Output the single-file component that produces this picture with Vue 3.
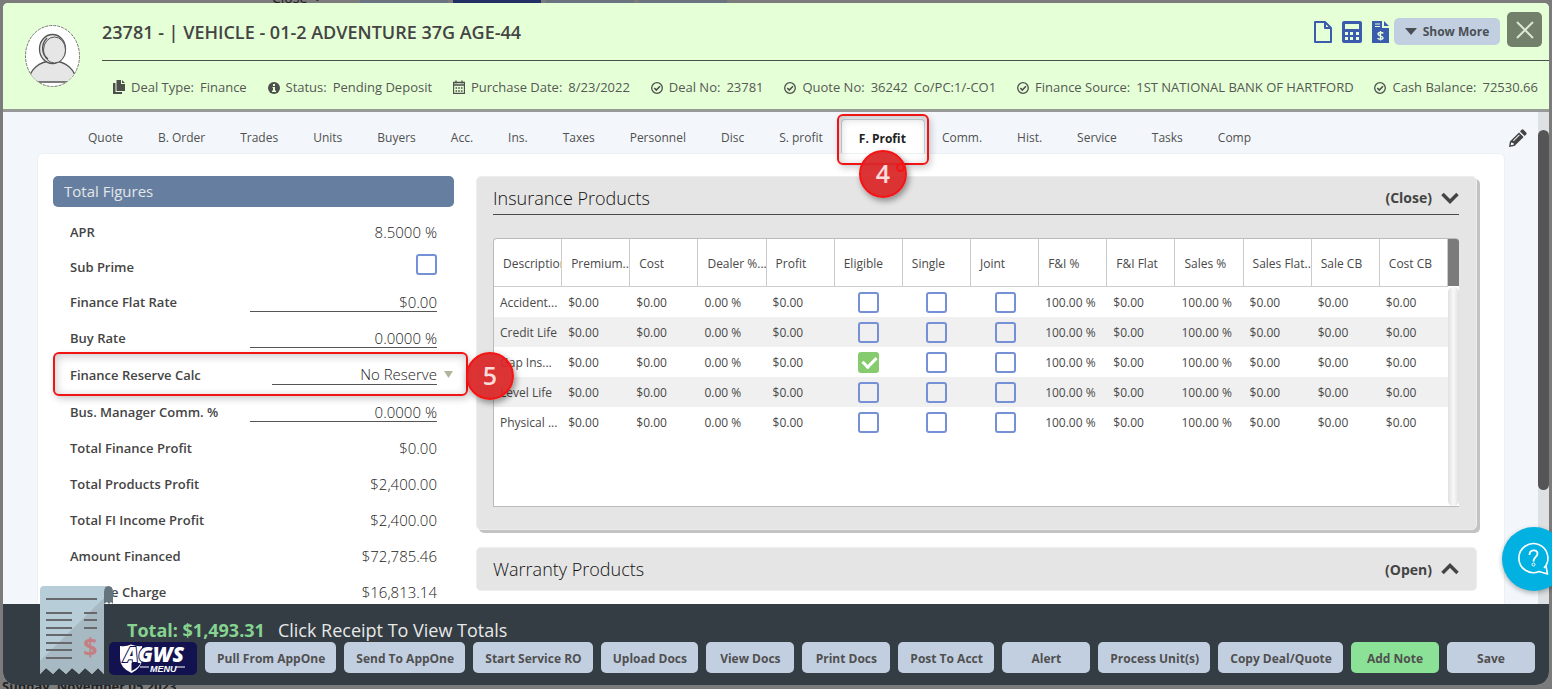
<script setup>
import { ref } from 'vue'

const tabs = ['Quote', 'B. Order', 'Trades', 'Units', 'Buyers', 'Acc.', 'Ins.', 'Taxes', 'Personnel', 'Disc', 'S. profit', 'F. Profit', 'Comm.', 'Hist.', 'Service', 'Tasks', 'Comp']
const active = ref('F. Profit')

const details = [
  { icon: 'copy', label: 'Deal Type:', value: 'Finance' },
  { icon: 'info', label: 'Status:', value: 'Pending Deposit' },
  { icon: 'calendar', label: 'Purchase Date:', value: '8/23/2022' },
  { icon: 'check', label: 'Deal No:', value: '23781' },
  { icon: 'check', label: 'Quote No:', value: '36242', extra: 'Co/PC:1/-CO1' },
  { icon: 'check', label: 'Finance Source:', value: '1ST NATIONAL BANK OF HARTFORD' },
  { icon: 'check', label: 'Cash Balance:', value: '72530.66' },
]

const figures = ref([
  { id: 'apr', label: 'APR', value: '8.5000 %', kind: 'text' },
  { id: 'sub', label: 'Sub Prime', value: false, kind: 'check' },
  { id: 'flat', label: 'Finance Flat Rate', value: '$0.00', kind: 'input' },
  { id: 'buy', label: 'Buy Rate', value: '0.0000 %', kind: 'input' },
  { id: 'reserve', label: 'Finance Reserve Calc', value: 'No Reserve', kind: 'select' },
  { id: 'comm', label: 'Bus. Manager Comm. %', value: '0.0000 %', kind: 'input' },
  { id: 'tfp', label: 'Total Finance Profit', value: '$0.00', kind: 'text' },
  { id: 'tpp', label: 'Total Products Profit', value: '$2,400.00', kind: 'text' },
  { id: 'tfi', label: 'Total FI Income Profit', value: '$2,400.00', kind: 'text' },
  { id: 'amt', label: 'Amount Financed', value: '$72,785.46', kind: 'text' },
  { id: 'chg', label: 'Finance Charge', value: '$16,813.14', kind: 'text' },
])

const columns = ['Description', 'Premium...', 'Cost', 'Dealer %...', 'Profit', 'Eligible', 'Single', 'Joint', 'F&I %', 'F&I Flat', 'Sales %', 'Sales Flat...', 'Sale CB', 'Cost CB']
const products = ref([
  { name: 'Accident...', flags: [false, false, false] },
  { name: 'Credit Life', flags: [false, false, false] },
  { name: 'Gap Ins...', flags: [true, false, false] },
  { name: 'Level Life', flags: [false, false, false] },
  { name: 'Physical ...', flags: [false, false, false] },
])
const before = ['$0.00', '$0.00', '0.00 %', '$0.00']
const after = ['100.00 %', '$0.00', '100.00 %', '$0.00', '$0.00', '$0.00']
const actions = ['Pull From AppOne', 'Send To AppOne', 'Start Service RO', 'Upload Docs', 'View Docs', 'Print Docs', 'Post To Acct', 'Alert', 'Process Unit(s)', 'Copy Deal/Quote', 'Add Note', 'Save']
</script>

<template>
  <div class="page">
    <div class="under-top" aria-hidden="true">
      <span class="under-close">Close &lt;</span><i></i><i class="navy"></i><i></i><i></i>
    </div>
    <div class="under-date">Sunday, November 05 2023</div>

    <main class="modal">
      <header class="head">
        <svg class="avatar" viewBox="0 0 55 62">
          <defs><clipPath id="oval"><ellipse cx="27.5" cy="31" rx="27" ry="30.5" /></clipPath></defs>
          <ellipse cx="27.5" cy="31" rx="27" ry="30.5" fill="#fff" stroke="#777" stroke-width="1" stroke-dasharray="3 1" />
          <g clip-path="url(#oval)" fill="#e6e6e6" stroke="#555" stroke-width="1.3">
            <path d="M4 57C4 45 14 36 27.500 36S51 45 51 57z" />
            <ellipse cx="27.500" cy="24" rx="13" ry="14.500" />
            <ellipse cx="29.500" cy="25" rx="11" ry="13" stroke-width="1" />
            <path d="M22 13c-6 6-6 16 1 21" fill="none" />
          </g>
        </svg>
        <div class="head-main">
          <div class="title-row">
            <h1>23781 - | VEHICLE - 01-2 ADVENTURE 37G AGE-44</h1>
            <div class="tools">
              <button class="tool" aria-label="New document">
                <svg width="18" height="22" viewBox="0 0 18 22"><path d="M1 1h10l6 6v14H1zM11 1v6h6" fill="none" stroke="#3b5bad" stroke-width="2" stroke-linejoin="round" /></svg>
              </button>
              <button class="tool" aria-label="Calculator">
                <svg width="20" height="22" viewBox="0 0 20 22"><path fill="#3b5bad" fill-rule="evenodd" d="M2 0h16a2 2 0 0 1 2 2v18a2 2 0 0 1-2 2H2a2 2 0 0 1-2-2V2a2 2 0 0 1 2-2zM3 3v5h14V3zM3 11v3h3v-3zM8 11v3h3v-3zM14 11v3h3v-3zM3 16v3h3v-3zM8 16v3h3v-3zM14 16v3h3v-3z" /></svg>
              </button>
              <button class="tool" aria-label="Invoice">
                <svg width="17" height="22" viewBox="0 0 17 22"><path fill="#3b5bad" d="M0 0h10v7h7v15H0zM12 0l5 5h-5z" /><path d="M3 3h5M3 5.500h5" stroke="#e5ffd6" /><path d="M11.300 12.500C10.500 11 6 11 6 13s5 1.700 5 3.700-4.500 2-5.400.3M8.500 10v9.500" fill="none" stroke="#e5ffd6" stroke-width="1.400" /></svg>
              </button>
              <button class="show-more"><svg width="12" height="7" viewBox="0 0 12 7"><path d="M0 0h12L6 7z" fill="#4a4f55" /></svg>Show More</button>
              <button class="close" aria-label="Close"><svg width="18" height="18" viewBox="0 0 18 18"><path d="M1 1l16 16M17 1L1 17" stroke="#dbe6d3" stroke-width="2" /></svg></button>
            </div>
          </div>
          <div class="details">
            <span v-for="d in details" :key="d.label" class="detail">
              <svg v-if="d.icon === 'copy'" width="12" height="14" viewBox="0 0 12 14"><path d="M3.500 0H8v4h4v7H3.500zM9 0l3 3H9zM0 3h2.500v9H9v2H0z" fill="#4c4f4c" /></svg>
              <svg v-else-if="d.icon === 'info'" width="12" height="14" viewBox="0 0 12 14"><circle cx="6" cy="8" r="6" fill="#4c4f4c" /><path d="M5 4h2v2H5zM4.500 7H7v3.500h1V12H4v-1.500h1V8h-.500z" fill="#e5ffd6" /></svg>
              <svg v-else-if="d.icon === 'calendar'" width="12" height="14" viewBox="0 0 12 14"><path d="M.5 2.500h11v11H.5zM.5 5h11M3 .5v3M9 .5v3" fill="none" stroke="#4c4f4c" stroke-width="1.300" /><path d="M2.500 8h7M2.500 11h7" stroke="#4c4f4c" stroke-width="1.600" stroke-dasharray="1.600 1.100" /></svg>
              <svg v-else width="12" height="14" viewBox="0 0 12 14"><circle cx="6" cy="8" r="5.300" fill="none" stroke="#4c4f4c" stroke-width="1.300" /><path d="M3.300 8l2 2L9 6.200" fill="none" stroke="#4c4f4c" stroke-width="1.600" /></svg>
              <span>{{ d.label }}</span><span>{{ d.value }}</span><span v-if="d.extra">{{ d.extra }}</span>
            </span>
          </div>
        </div>
      </header>

      <section class="body">
        <div class="content">
          <nav class="tabs">
            <button v-for="t in tabs" :key="t" :class="['tab', { on: t === active }]" @click="active = t">
              {{ t }}
              <span v-if="t === 'F. Profit'" class="mark tab-mark"></span>
              <span v-if="t === 'F. Profit'" class="badge tab-badge">4<i></i></span>
            </button>
            <button class="edit" aria-label="Edit">
              <svg width="18" height="18" viewBox="0 0 18 18"><path fill="#444" fill-rule="evenodd" d="M12.500.8a1.500 1.500 0 0 1 2 0l2.700 2.700a1.500 1.500 0 0 1 0 2L15.600 7 11 2.400zM10 3.400L14.600 8 5.500 17.100 0 18l.9-5.500zM2.200 13.300l-.5 3 3-.5-.2-1.900-1.700-.1zM10 5.500l-6 6 .7.700 6-6z" /></svg>
            </button>
          </nav>

          <div class="panel">
            <section class="figures">
              <h2>Total Figures</h2>
              <div v-for="f in figures" :key="f.id" :class="['row', f.kind]">
                <label :for="f.id">{{ f.label }}</label>
                <input v-if="f.kind === 'check'" :id="f.id" v-model="f.value" class="box" type="checkbox">
                <input v-else-if="f.kind === 'input'" :id="f.id" v-model="f.value" class="field" type="text">
                <select v-else-if="f.kind === 'select'" :id="f.id" v-model="f.value" class="field pick"><option>No Reserve</option></select>
                <output v-else :id="f.id">{{ f.value }}</output>
                <template v-if="f.kind === 'select'">
                  <svg class="arrow" width="10" height="7" viewBox="0 0 10 7"><path d="M0 0h9L4.500 7z" fill="#b1b69b" /></svg>
                  <span class="mark row-mark"></span>
                  <span class="badge row-badge">5</span>
                </template>
              </div>
            </section>

            <div class="cards">
              <section class="card raised">
                <div class="card-head lined">
                  <h2>Insurance Products</h2>
                  <button>(Close)<svg width="18" height="12" viewBox="0 0 18 12"><path d="M1.500 2L9 9.500 16.500 2" fill="none" stroke="#444" stroke-width="3.500" /></svg></button>
                </div>
                <div class="grid">
                  <table>
                    <thead><tr><th v-for="c in columns" :key="c">{{ c }}</th></tr></thead>
                    <tbody>
                      <tr v-for="p in products" :key="p.name">
                        <td>{{ p.name }}</td>
                        <td v-for="(b, i) in before" :key="'b' + i">{{ b }}</td>
                        <td v-for="(_, i) in p.flags" :key="'f' + i" class="mid"><input v-model="p.flags[i]" class="box" type="checkbox" :aria-label="p.name + ' ' + columns[i + 5]"></td>
                        <td v-for="(a, i) in after" :key="'a' + i">{{ a }}</td>
                      </tr>
                    </tbody>
                  </table>
                  <div class="grid-bar"><i></i><b></b></div>
                </div>
              </section>
              <section class="card">
                <div class="card-head">
                  <h2>Warranty Products</h2>
                  <button>(Open)<svg width="18" height="12" viewBox="0 0 18 12"><path d="M1.500 10L9 2.500 16.500 10" fill="none" stroke="#444" stroke-width="3.500" /></svg></button>
                </div>
              </section>
            </div>
          </div>
        </div>
        <div class="scroll"><i></i></div>
      </section>

      <footer class="foot">
        <svg class="receipt" width="74" height="88" viewBox="0 0 74 88">
          <path d="M4 0h64q-4 1-4 6v82l-6-6-6 6-7-6-6 6-7-6-6 6-7-6-6 6-7-6-6 6V4q0-4 4-4z" fill="#b7cdd7" />
          <path d="M64 12v76l-6-6-6 6-7-6-6 6-7-6-6 6-7-6-6 6-7-6-6 6V75z" fill="#a7b9c2" />
          <path d="M64 18V6q0-6 4.500-6T73 6v12l-2-2-2 2-2-2z" fill="#66757d" />
          <path d="M6 13h51M6 27h26M6 34h26M6 42h26M6 49h26M6 57h26M6 64h26M6 72h26M44 27h13M44 34h13M44 42h13" stroke="#66686b" stroke-width="2" />
          <text x="50.500" y="70" text-anchor="middle" class="dollar">$</text>
        </svg>
        <p class="totals"><strong>Total: $1,493.31</strong><span>Click Receipt To View Totals</span></p>
        <div class="actions">
          <button class="agws" aria-label="AGWS Menu">
            <svg width="88" height="33" viewBox="0 0 88 33">
              <path d="M11 4Q17 5 22 2.500 28 5 33 4V16Q33 26 22.500 31 11 26 11 16z" fill="#fff" />
              <path d="M22.500 21v8q8-4 9-8z" fill="#11124f" />
              <path d="M31 25h9M67 25h9" stroke="#fff" />
              <text x="15" y="20" class="logo-big">AGWS</text>
              <text x="41" y="30" class="logo-small">MENU</text>
            </svg>
          </button>
          <button v-for="a in actions" :key="a" :class="['act', { green: a === 'Add Note' }]">{{ a }}</button>
        </div>
      </footer>
    </main>

    <button class="chat" aria-label="Help">
      <svg width="32" height="36" viewBox="0 0 32 36"><path d="M26 27A14.500 14.500 0 1 0 21 30.500L29.500 33 28 25" fill="none" stroke="#fff" stroke-width="1.600" stroke-linejoin="round" /><path d="M11.500 14c0-6 8-6 8-1.500 0 3.500-4 3.500-4 8" fill="none" stroke="#fff" stroke-width="1.800" /><circle cx="15.500" cy="23.500" r="1.500" fill="none" stroke="#fff" /></svg>
    </button>
  </div>
</template>

<style>
body { margin: 0; overflow: hidden; }
</style>

<style scoped>
* { box-sizing: border-box; }
.page { position: relative; height: 100vh; min-height: 400px; padding: 3px 3px 4px; overflow: hidden; background: #7b7b7b; font-family: "Open Sans", "Noto Sans", sans-serif; color: #444; }
button { font: inherit; color: inherit; border: 0; padding: 0; background: none; cursor: pointer; }
h1, h2, p { margin: 0; }
svg { display: block; flex: none; }

.under-top { position: absolute; left: 272px; top: 0; display: flex; gap: 5px; height: 3px; }
.under-top i { width: 88px; background: #697480; }
.under-top .navy { background: #223063; }
.under-close { width: 83px; line-height: 3px; margin-top: -4px; font-size: 14px; color: #222; }
.under-date { position: absolute; left: 2px; bottom: -6px; font-size: 13px; line-height: 18px; font-weight: 700; color: #222; }

.modal { position: relative; display: flex; flex-direction: column; height: 100%; border-radius: 5px 5px 13px 13px; overflow: hidden; background: #f3f7fb; }

.head { display: flex; flex: none; padding-left: 22px; gap: 22px; background: #e5ffd6; border-bottom: 3px solid #979a97; }
.avatar { width: 55px; height: 62px; margin-top: 22px; }
.head-main { flex: 1; min-width: 0; }
.title-row { display: flex; align-items: center; justify-content: space-between; height: 58px; padding-right: 7px; border-bottom: 1px solid #4c4f4c; }
h1 { font-size: 18px; line-height: 24px; font-weight: 600; white-space: nowrap; }
.tools { display: flex; align-items: center; gap: 10px; }
.show-more { display: flex; align-items: center; justify-content: center; gap: 6px; width: 106px; height: 27px; margin-left: -5px; border-radius: 5px; background: #c2cfe0; font-size: 12px; font-weight: 700; color: #4a4f55; }
.close { display: grid; place-items: center; width: 35px; height: 35px; margin: 0 0 4px -3px; border-radius: 5px; background: #727f6b; }
.details { display: flex; align-items: center; justify-content: space-between; height: 48px; padding: 3px 11px 0; font-size: 13px; white-space: nowrap; color: #555855; }
.detail { display: flex; align-items: center; gap: 6px; }

.body { display: flex; flex: 1; min-height: 0; }
.content { flex: 1; min-width: 0; display: flex; flex-direction: column; padding: 7px 33px 0 34px; }
.tabs { position: relative; z-index: 2; display: flex; flex: none; height: 34px; padding-left: 34px; }
.tab { position: relative; padding: 3px 18px 0 17px; font-size: 12px; font-weight: 400; white-space: nowrap; color: #505050; }
.tab.on { background: #fff; border: 1px solid #ccd2da; border-bottom: 0; border-radius: 4px 4px 0 0; font-weight: 700; color: #222; }
.edit { position: absolute; right: -22px; top: 10px; }
.mark { position: absolute; border: 2px solid #f01414; border-radius: 6px; box-shadow: 2px 3px 7px rgba(0, 0, 0, .2), inset 1px 2px 10px rgba(0, 0, 0, .22); pointer-events: none; }
.badge { position: absolute; width: 48px; height: 48px; border: 2px solid #f51414; border-radius: 50%; background: rgba(218, 38, 40, .94); box-shadow: 2px 3px 6px rgba(0, 0, 0, .4); color: #fbdcdc; font-family: "Open Sans", sans-serif; font-size: 25px; line-height: 42px; font-weight: 600; text-align: center; }
.tab-mark { left: -5px; right: -5px; top: -6px; height: 51px; }
.tab-badge { left: 50%; top: 30px; margin-left: -24px; }
.tab-badge i { position: absolute; right: 0; top: 11px; width: 9px; height: 9px; border: 2px solid #f51414; border-radius: 50%; }
.panel { flex: 1; min-height: 0; display: grid; grid-template-columns: 401px minmax(0, 1fr); gap: 22px; align-items: start; padding: 22px 27px 0 15px; background: #fff; border: 1px solid #edf0f2; border-bottom: 0; border-radius: 6px 6px 0 0; overflow: hidden; }
.scroll { width: 11px; padding-top: 18px; background: #dde1e4; }
.scroll i { display: block; height: 76%; border-radius: 6px; background: #555; }

.figures h2 { height: 31px; margin-bottom: 7px; padding-left: 11px; border-radius: 5px; background: #667fa0; color: #e4e6e8; font-size: 15px; line-height: 31px; font-weight: 400; }
.row { position: relative; display: flex; align-items: center; justify-content: space-between; height: 36px; padding: 0 17px; }
.row.check { height: 34px; }
.row.check .box { margin-bottom: 5px; }
.row.select { height: 38px; }
.row label { font-size: 13px; font-weight: 600; }
.row output { font-size: 15px; font-weight: 300; color: #222; }
.field { width: 187px; height: 20px; padding: 0; border: 0; border-bottom: 1px solid #555; border-radius: 0; outline: 0; background: transparent; color: #222; font: 300 15px/19px "Open Sans", sans-serif; text-align: right; }
.pick { width: 165px; appearance: none; text-align-last: right; }
.arrow { position: absolute; right: 0; top: 15px; }
.row-mark { left: 0; right: -14px; top: -4px; height: 44px; }
.row-badge { left: 413px; top: -4px; z-index: 2; }

.box { position: relative; display: block; appearance: none; width: 21px; height: 21px; margin: 0; border: 2px solid #7590d5; border-radius: 3px; }
.box:checked { border-color: #86cb6d; background: #86cb6d; }
.box:checked::after { content: ""; position: absolute; left: 5px; top: 0; width: 6px; height: 11px; border: solid #fff; border-width: 0 3px 3px 0; transform: rotate(45deg); }

.cards { display: grid; gap: 17px; }
.card { padding: 0 17px 0 16px; border: 1px solid #eee; border-radius: 5px; background: #e5e5e5; }
.raised { padding-bottom: 22px; box-shadow: 3px 3px 0 #c3c3c3; }
.card-head { display: flex; align-items: center; justify-content: space-between; height: 42px; }
.card-head.lined { height: 38px; margin-bottom: 23px; padding-top: 4px; border-bottom: 1px solid #4a4a4a; }
.card h2 { font-size: 18px; font-weight: 300; color: #111; }
.card-head button { display: flex; align-items: center; gap: 9px; font-size: 14px; font-weight: 700; }
.grid { display: flex; min-height: 269px; border: 1px solid #bbb; border-right: 0; border-radius: 4px 4px 0 0; background: #fff; align-items: stretch; }
table { flex: 1; min-width: 0; width: 0; table-layout: fixed; border-collapse: separate; border-spacing: 0; align-self: flex-start; font-size: 12px; }
th, td { overflow: hidden; white-space: nowrap; text-align: left; font-weight: 400; color: #484848; }
th { height: 48px; padding: 2px 0 0 9px; border-right: 1px solid #ccc; border-bottom: 1px solid #ccc; }
td { height: 30px; padding: 0 0 0 6px; }
tbody tr:nth-child(even) { background: #f0f0f0; }
td.mid { padding: 0 6px; }
.mid .box { margin: 0 auto; }
.grid-bar { display: flex; flex-direction: column; width: 11px; }
.grid-bar i { height: 47px; background: #7b7b7b; border-radius: 0 3px 0 0; }
.grid-bar b { flex: 1; margin-top: 1px; border-radius: 6px; background: linear-gradient(90deg, #e0e0e0, #f8f8f8 50%, #e0e0e0); }

.foot { position: relative; z-index: 3; flex: none; padding: 14px 14px 10px 106px; background: #333d43; }
.receipt { position: absolute; left: 37px; bottom: 11px; }
.dollar { font: 700 25px "Open Sans", sans-serif; fill: #c37f82; }
.totals { display: flex; gap: 13px; padding-left: 18px; font-size: 18px; line-height: 24px; color: #e8e8e8; }
.totals strong { color: #86d391; }
.actions { display: flex; justify-content: space-between; align-items: flex-start; gap: 8px; }
.agws { height: 33px; border-radius: 5px; background: #11124f; }
.logo-big { font: italic 800 21px "Open Sans", sans-serif; fill: #fff; stroke: #11124f; stroke-width: 2; paint-order: stroke; }
.logo-small { font: italic 700 9px "Liberation Sans", sans-serif; fill: #fff; }
.act { min-width: 88px; height: 31px; padding: 1px 12px 0; border-radius: 5px; background: #c2cfe0; color: #505050; font-size: 12px; font-weight: 700; white-space: nowrap; }
.act.green { background: #8be196; }

.chat { position: fixed; right: -14px; bottom: 98px; z-index: 5; display: grid; place-items: center; width: 64px; height: 64px; border-radius: 50%; background: #00b1e1; box-shadow: 0 2px 5px rgba(0, 0, 0, .3); }
</style>
